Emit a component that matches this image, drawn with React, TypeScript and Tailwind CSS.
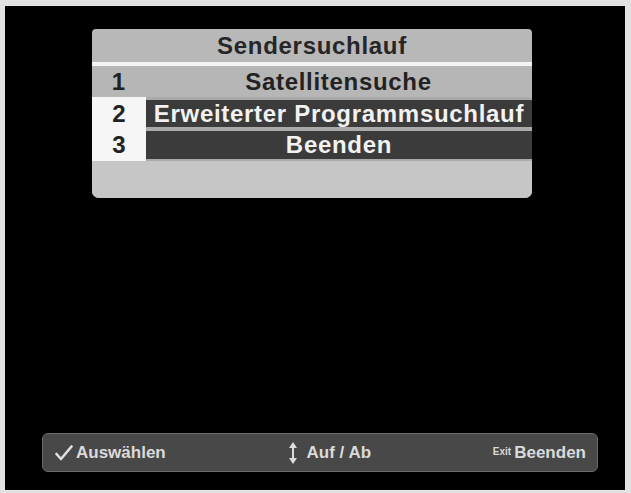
const font = { fontFamily: '"Liberation Sans", Arial, sans-serif' };

function UpDownIcon() {
  return (
    <svg width="10" height="24" viewBox="0 0 10 24" className="shrink-0">
      <path d="M5 1 L9 7 L1 7 Z" fill="#dcdcdc" />
      <rect x="4" y="6" width="2" height="12" fill="#dcdcdc" />
      <path d="M5 23 L9 17 L1 17 Z" fill="#dcdcdc" />
    </svg>
  );
}

function CheckIcon() {
  return (
    <svg width="18" height="16" viewBox="0 0 18 16" className="shrink-0">
      <path d="M1.5 9 L6 14 L16.5 1.5" fill="none" stroke="#e0e0e0" strokeWidth="2.6" strokeLinecap="round" strokeLinejoin="round" />
    </svg>
  );
}

export default function App() {
  return (
    <div className="w-[631px] h-[493px] bg-[#e2e2e2] pt-[6px] pl-[5px] pr-[6px] pb-[3px]" style={font}>
      <div className="h-full bg-black flex flex-col">
        <div className="mt-[23px] ml-[87px] w-[440px] rounded-t-[4px] rounded-b-[7px] overflow-hidden bg-[#b8b8b8]">
          <div className="h-[33px] flex items-center justify-center text-[24px] font-bold tracking-[0.7px] text-[#262626]">
            Sendersuchlauf
          </div>
          <div className="h-[4px] bg-[#f4f4f4]" />
          <div className="h-[31px] flex items-center bg-[#b6b6b6] text-[24px] font-bold text-[#222]">
            <div className="w-[53px] text-center">1</div>
            <div className="flex-1 text-center tracking-[0.7px]">Satellitensuche</div>
          </div>
          <div className="flex h-[64px]">
            <div className="w-[54px] bg-[#f6f6f6] flex flex-col text-[24px] font-bold text-[#222]">
              <div className="h-[32px] flex items-center justify-center pt-[2px]">2</div>
              <div className="h-[32px] flex items-center justify-center">3</div>
            </div>
            <div className="flex-1 flex flex-col bg-[#aaaaaa] pt-[3px] pb-[2px] gap-[4px] text-[24px] font-bold text-[#f2f2f2] tracking-[0.7px]">
              <div className="h-[27px] bg-[#3b3b3b] flex items-center justify-center whitespace-nowrap">
                Erweiterter Programmsuchlauf
              </div>
              <div className="h-[28px] bg-[#3b3b3b] flex items-center justify-center">Beenden</div>
            </div>
          </div>
          <div className="h-[37px] bg-[#c6c6c6]" />
        </div>

        <div className="mt-auto mb-[18px] ml-[37px] w-[556px] h-[39px] rounded-[6px] border-[1.5px] border-[#6c6c6c] bg-[#484848] flex items-center justify-between pl-[12px] pr-[11px] text-[17px] font-bold text-[#dadada]">
          <div className="flex items-center gap-[3px]">
            <CheckIcon />
            <span>Auswählen</span>
          </div>
          <div className="flex items-center gap-[9px]">
            <UpDownIcon />
            <span>Auf / Ab</span>
          </div>
          <div className="flex items-center gap-[3px]">
            <span className="text-[10px] leading-none self-start mt-[7px]">Exit</span>
            <span>Beenden</span>
          </div>
        </div>
      </div>
    </div>
  );
}
